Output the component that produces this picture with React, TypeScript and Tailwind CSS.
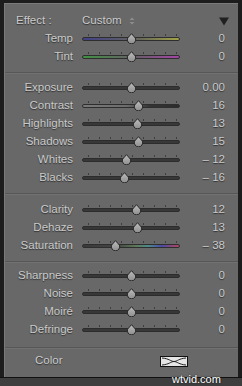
import React from 'react';

type Track = 'plain' | 'temp' | 'tint' | 'sat' | 'contrast';

interface Slider {
  label: string;
  value: string;
  pos: number; // thumb centre, px from track start
  track?: Track;
}

const trackClass: Record<Track, string> = {
  plain: 'bg-[#383838] border border-[#2c2c2c]',
  temp: 'border border-[#2e2e2e] bg-[linear-gradient(to_right,#41418a,#575770_35%,#6a6a5a_60%,#a3a446)]',
  tint: 'border border-[#2e2e2e] bg-[linear-gradient(to_right,#3f9243,#5a705a_35%,#6e5a6e_60%,#a645a8)]',
  sat: 'border border-[#2e2e2e] bg-[linear-gradient(to_right,#393939,#454545_35%,#5c7a58_55%,#4c8a8c_68%,#4a4aa6_82%,#b5455c)]',
  contrast: 'border border-[#2e2e2e] bg-[linear-gradient(to_right,#7a7a7a,#6c6c6c_45%,#333_70%,#2c2c2c)]',
};

const groups: Slider[][] = [
  [
    { label: 'Exposure', value: '0.00', pos: 49 },
    { label: 'Contrast', value: '16', pos: 56, track: 'contrast' },
    { label: 'Highlights', value: '13', pos: 55 },
    { label: 'Shadows', value: '15', pos: 56 },
    { label: 'Whites', value: '– 12', pos: 44 },
    { label: 'Blacks', value: '– 16', pos: 42 },
  ],
  [
    { label: 'Clarity', value: '12', pos: 54 },
    { label: 'Dehaze', value: '13', pos: 55 },
    { label: 'Saturation', value: '– 38', pos: 33, track: 'sat' },
  ],
  [
    { label: 'Sharpness', value: '0', pos: 49 },
    { label: 'Noise', value: '0', pos: 49 },
    { label: 'Moiré', value: '0', pos: 49 },
    { label: 'Defringe', value: '0', pos: 49 },
  ],
];

const textCls =
  "text-[11.5px] text-[#cacaca] [font-family:'Liberation_Sans',Arial,sans-serif] [text-shadow:0_1px_1px_rgba(0,0,0,0.55)]";

function Thumb() {
  return (
    <svg width="11" height="11" viewBox="0 0 11 11">
      <defs>
        <linearGradient id="tg" x1="0" y1="0" x2="0" y2="1">
          <stop offset="0" stopColor="#bdbdbd" />
          <stop offset="1" stopColor="#8e8e8e" />
        </linearGradient>
      </defs>
      <path
        d="M5.5 0.7 L9.4 5.1 A4.2 4.2 0 1 1 1.6 5.1 Z"
        fill="url(#tg)"
        stroke="#262626"
        strokeWidth="1"
      />
    </svg>
  );
}

function SliderRow({ label, value, pos, track = 'plain' }: Slider) {
  return (
    <div className="flex h-[18px] items-center">
      <div className={`w-[68px] text-right ${textCls}`}>{label}</div>
      <div className="relative ml-[9px] h-[18px] w-[98px]">
        <div className="absolute left-[6px] right-[3px] top-[4px] flex justify-between">
          {Array.from({ length: 9 }).map((_, i) => (
            <div key={i} className="h-[2px] w-px bg-[#3e3e3e]" />
          ))}
        </div>
        <div className={`absolute left-0 right-0 top-[7px] h-[4px] rounded-full ${trackClass[track]}`} />
        <div className="absolute top-[3px]" style={{ left: pos - 5.5 }}>
          <Thumb />
        </div>
      </div>
      <div className={`w-[45px] text-right ${textCls}`}>{value}</div>
    </div>
  );
}

function Separator() {
  return <div className="h-[2px] border-t border-[#575757] border-b border-b-[#717171]" />;
}

export default function App() {
  return (
    <div className="relative flex h-[386px] w-[242px] flex-col bg-[#1d1d1d] pt-[3px]">
      <div className="mx-[4px] h-[374px] border-l border-t border-[#7b7b7b] bg-[#686868]">
        {/* Effect + white balance */}
        <div className="pb-[6px] pt-[8px]">
          <div className="flex h-[18px] items-center">
            <div className={`pl-[11px] w-[77px] ${textCls} text-[#bdbdbd]`}>Effect :</div>
            <div className={`${textCls} text-[#b4b4b4]`}>Custom</div>
            <svg width="6" height="8" viewBox="0 0 6 8" className="ml-[7px]">
              <path d="M3 0.5 L5.5 3 H0.5 Z M3 7.5 L5.5 5 H0.5 Z" fill="#8c8c8c" />
            </svg>
            <svg width="10" height="9" viewBox="0 0 10 9" className="ml-auto mr-[9px]">
              <path d="M0 0.5 H10 L5 8.5 Z" fill="#202020" />
            </svg>
          </div>
          <SliderRow label="Temp" value="0" pos={49} track="temp" />
          <SliderRow label="Tint" value="0" pos={49} track="tint" />
        </div>
        <Separator />
        <div className="pb-[6px] pt-[5px]">
          {groups[0].map((s) => (
            <SliderRow key={s.label} {...s} />
          ))}
        </div>
        <Separator />
        <div className="pb-[6px] pt-[6px]">
          {groups[1].map((s) => (
            <SliderRow key={s.label} {...s} />
          ))}
        </div>
        <Separator />
        <div className="pb-[8px] pt-[4px]">
          {groups[2].map((s) => (
            <SliderRow key={s.label} {...s} />
          ))}
        </div>
        <Separator />
        {/* Color */}
        <div className="pt-[3px]">
          <div className="flex h-[18px] items-center">
            <div className={`pl-[30px] w-[155px] ${textCls} text-[#c2c2c2]`}>Color</div>
            <svg width="28" height="11" viewBox="0 0 28 11">
              <rect x="0.5" y="0.5" width="27" height="10" fill="#e6e6e6" stroke="#111" />
              <path
                d="M2 2 C9 2.5 11 5.5 14 5.5 C17 5.5 19 8.5 26 9 M2 9 C9 8.5 11 5.5 14 5.5 C17 5.5 19 2.5 26 2"
                fill="none"
                stroke="#222"
                strokeWidth="1"
              />
            </svg>
          </div>
        </div>
      </div>
      <div className="h-px bg-[#111]" />
      <div className="flex-1 bg-[#3e3e3e]" />
      <div className="absolute left-[172px] top-[371px] text-[11px] text-white [font-family:'Liberation_Sans',Arial,sans-serif] [text-shadow:0_0_2px_rgba(0,0,0,0.9)]">
        wtvid.com
      </div>
    </div>
  );
}
